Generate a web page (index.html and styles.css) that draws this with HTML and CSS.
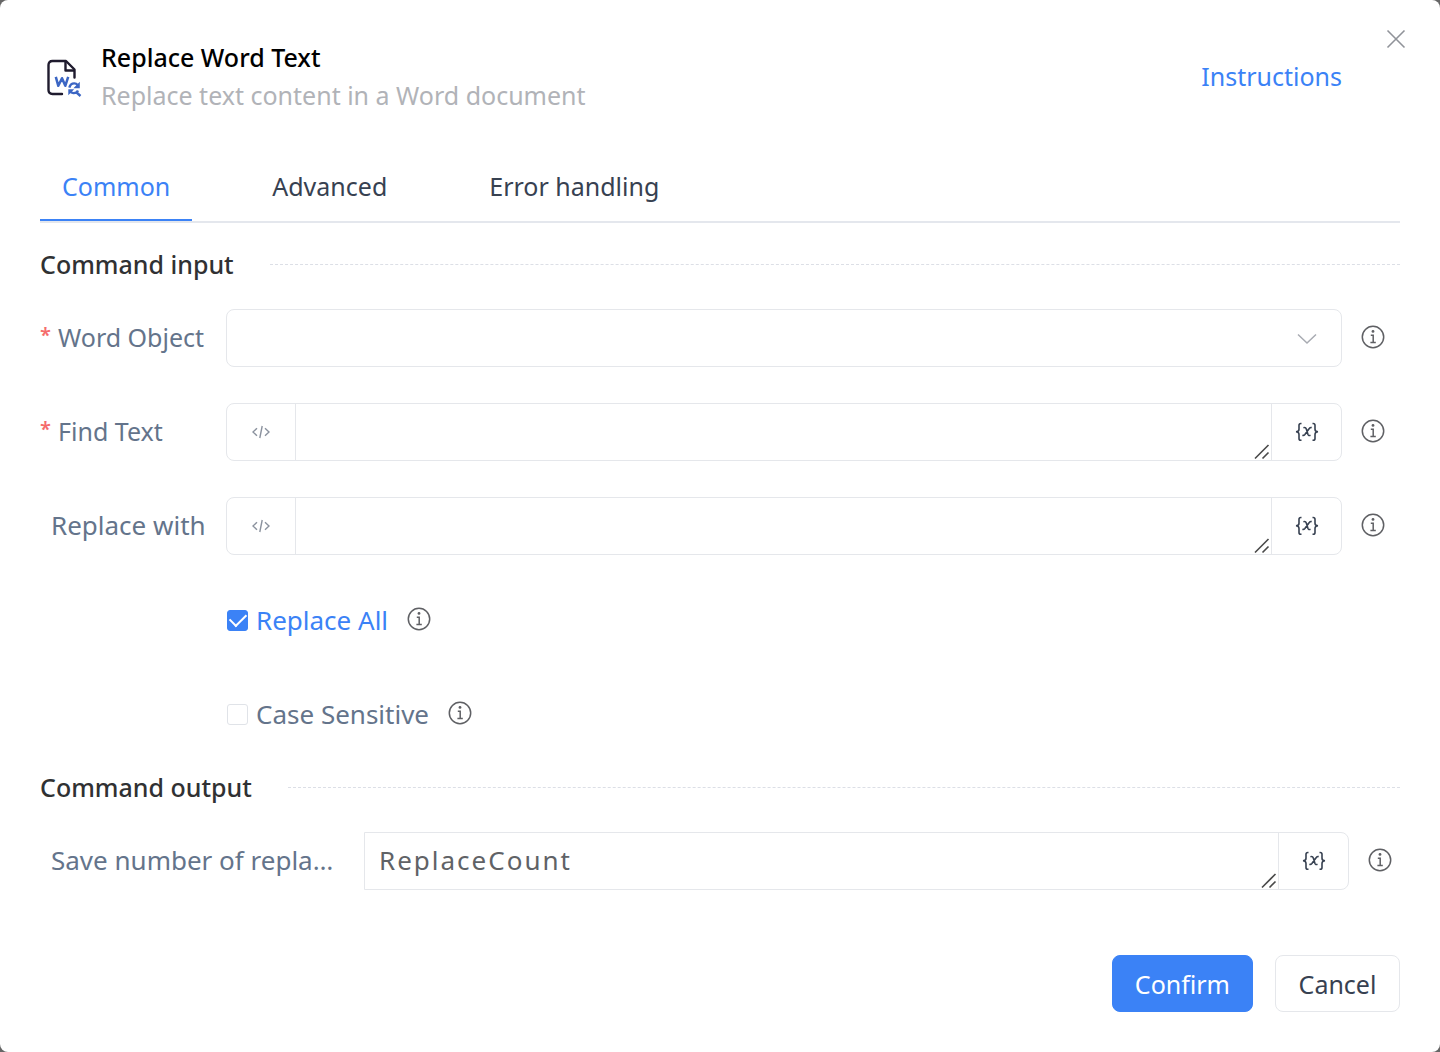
FILE: index.html
```html
<!DOCTYPE html>
<html lang="en">
<head>
<meta charset="utf-8">
<meta name="viewport" content="width=device-width, initial-scale=1">
<title>Replace Word Text</title>
<link rel="stylesheet" href="styles.css">
</head>
<body>
<svg class="sprite" aria-hidden="true">
  <symbol id="info" viewBox="0 0 24 24">
    <circle cx="12" cy="12" r="10.7" fill="none" stroke="currentColor" stroke-width="1.5"/>
    <circle cx="12" cy="6.4" r="1.4" fill="currentColor"/>
    <path d="M9.800 10.300h2.400v7M9.400 17.600h5.400" fill="none" stroke="currentColor" stroke-width="1.5"/>
  </symbol>
  <symbol id="code" viewBox="0 0 18 14">
    <path d="M5 3.2 1 7l4 3.8M13 3.2 17 7l-4 3.8M10.2 1 7.8 13" fill="none" stroke="currentColor" stroke-width="1.4"/>
  </symbol>
  <symbol id="variable" viewBox="0 0 24 20">
    <path d="M6.500 1.500H5.800Q4 1.500 4 3.300V7.200Q4 9.600 1 9.800Q4 10 4 12.400v4Q4 18.200 5.800 18.200h.7M17.500 1.500h.7Q20 1.500 20 3.300V7.200Q20 9.600 23 9.800Q20 10 20 12.400v4Q20 18.200 18.200 18.200h-.7" fill="none" stroke="currentColor" stroke-width="1.600"/>
    <path d="M8.400 5.700q2.300-.6 2.900 1.200l1.600 5.400q.6 1.800 2.600.9M16.700 5.600q-1.500-.3-2.600 1.100L9.900 12.400q-1.100 1.400-2.500.9" fill="none" stroke="currentColor" stroke-width="1.600"/>
  </symbol>
  <symbol id="grip" viewBox="0 0 16 16">
    <path d="M1 14.500 14.500 1M8.500 14.500l6-6" fill="none" stroke="#4a4a4a" stroke-width="1.600"/>
  </symbol>
</svg>

<main class="dialog">
  <button class="close" type="button" aria-label="Close">
    <svg viewBox="0 0 20 20"><path d="M1.500 1.500l17 17M18.500 1.500l-17 17" fill="none" stroke="currentColor" stroke-width="1.600"/></svg>
  </button>

  <header class="header">
    <svg class="logo" viewBox="0 0 36 38" aria-hidden="true">
      <g fill="none" stroke-linejoin="round">
        <path d="M16 35H6.500Q2.500 35 2.500 31V6Q2.500 2 6.500 2H20L28.500 10.500V18.500" stroke="#1f1b2e" stroke-width="2.400" stroke-linecap="round"/>
        <path d="M19.500 2v9.500h9" stroke="#1f1b2e" stroke-width="2.400"/>
        <path d="M9.800 17.800l2.500 9 3.700-7.600 3.300 7.600 2.900-9" stroke="#3c66c4" stroke-width="2.500"/>
        <path d="M23.300 28.600q1.300-4.300 5-4.200 2 .1 3.300 1.600M32 31.500q-1.500 2.800-4.600 2.600-2.200-.2-3.500-1.800M30 33l4.500 4" stroke="#3c66c4" stroke-width="2.400"/>
      </g>
      <path d="M33.800 22.800v6.400h-6.400zM22.300 36.200v-5.900h5.900z" fill="#3c66c4"/>
    </svg>
    <div class="titles">
      <h1 class="title">Replace Word Text</h1>
      <p class="subtitle">Replace text content in a Word document</p>
    </div>
    <a class="help-link" href="#instructions">Instructions</a>
  </header>

  <nav class="tabs" role="tablist">
    <button class="tab tab-active" type="button" role="tab" aria-selected="true">Common</button>
    <button class="tab" type="button" role="tab" aria-selected="false">Advanced</button>
    <button class="tab" type="button" role="tab" aria-selected="false">Error handling</button>
  </nav>

  <form class="form">
    <h2 class="section">Command input</h2>
    <div class="rows">
      <div class="row">
        <label class="label required" for="word-object">Word Object</label>
        <div class="control">
          <select class="select" id="word-object"><option value=""></option></select>
          <svg class="chevron" viewBox="0 0 20 12" aria-hidden="true"><path d="M1 1.500l9 8.500 9-8.500" fill="none" stroke="currentColor" stroke-width="1.500"/></svg>
        </div>
        <button class="info" type="button" aria-label="About Word Object"><svg><use href="#info"/></svg></button>
      </div>
      <div class="row">
        <label class="label required" for="find-text">Find Text</label>
        <div class="control">
          <button class="addon addon-code" type="button" aria-label="Expression mode"><svg><use href="#code"/></svg></button>
          <div class="area-wrap"><textarea class="area" id="find-text" rows="1"></textarea><svg class="grip"><use href="#grip"/></svg></div>
          <button class="addon addon-var" type="button" aria-label="Insert variable"><svg><use href="#variable"/></svg></button>
        </div>
        <button class="info" type="button" aria-label="About Find Text"><svg><use href="#info"/></svg></button>
      </div>
      <div class="row">
        <label class="label" for="replace-with">Replace with</label>
        <div class="control">
          <button class="addon addon-code" type="button" aria-label="Expression mode"><svg><use href="#code"/></svg></button>
          <div class="area-wrap"><textarea class="area" id="replace-with" rows="1"></textarea><svg class="grip"><use href="#grip"/></svg></div>
          <button class="addon addon-var" type="button" aria-label="Insert variable"><svg><use href="#variable"/></svg></button>
        </div>
        <button class="info" type="button" aria-label="About Replace with"><svg><use href="#info"/></svg></button>
      </div>
      <div class="row row-check">
        <label class="check"><input class="box" type="checkbox" checked><span>Replace All</span></label>
        <button class="info" type="button" aria-label="About Replace All"><svg><use href="#info"/></svg></button>
      </div>
      <div class="row row-check">
        <label class="check"><input class="box" type="checkbox"><span>Case Sensitive</span></label>
        <button class="info" type="button" aria-label="About Case Sensitive"><svg><use href="#info"/></svg></button>
      </div>
    </div>

    <h2 class="section section-output">Command output</h2>
    <div class="row row-output">
      <label class="label" for="save-count">Save number of repla…</label>
      <div class="control control-square">
        <div class="area-wrap"><textarea class="area" id="save-count" rows="1">ReplaceCount</textarea><svg class="grip"><use href="#grip"/></svg></div>
        <button class="addon addon-var" type="button" aria-label="Insert variable"><svg><use href="#variable"/></svg></button>
      </div>
      <button class="info" type="button" aria-label="About the saved value"><svg><use href="#info"/></svg></button>
    </div>

    <footer class="footer">
      <button class="btn btn-primary" type="button">Confirm</button>
      <button class="btn" type="button">Cancel</button>
    </footer>
  </form>
</main>
</body>
</html>
```
FILE: styles.css
```css
* { box-sizing: border-box; }

body {
  margin: 0;
  background: #666;
  color: #374151;
  font: 25px/38px "Noto Sans", "Open Sans", sans-serif;
}

button, select, textarea {
  margin: 0;
  padding: 0;
  border: 0;
  background: none;
  color: inherit;
  font: inherit;
}

.sprite { display: none; }

.dialog {
  position: relative;
  min-height: 100vh;
  padding: 38px 40px 40px;
  border-radius: 8px;
  background: #fff;
}

.close {
  position: absolute;
  top: 29px;
  right: 34px;
  width: 20px;
  height: 20px;
  color: #909399;
}
.close svg { display: block; width: 20px; height: 20px; }

.header {
  display: flex;
  align-items: center;
  padding: 0 58px 0 6px;
}
.logo { width: 36px; height: 38px; margin: 4px 19px 0 0; }
.titles { flex: 1; min-width: 0; }
.title {
  margin: 0;
  color: #000;
  font-size: 25px;
  font-weight: 500;
}
.subtitle { margin: 0; color: #b1b3b8; }
.help-link { color: #3b82f6; text-decoration: none; }

.tabs {
  display: flex;
  gap: 58px;
  margin-top: 40px;
  border-bottom: 2px solid #e4e7ed;
}
.tab {
  padding: 0 22px;
  border-bottom: 2px solid transparent;
  line-height: 65px;
}
.tab-active { border-color: #3b82f6; color: #3b82f6; }

.section {
  display: flex;
  align-items: center;
  gap: 36px;
  margin: 22px 0 26px;
  color: #303133;
  font-size: 25px;
  font-weight: 500;
}
.section-output { margin-top: 25px; }
.section::after {
  content: "";
  flex: 1;
  border-top: 1px dashed #dcdfe6;
}

.rows { display: grid; gap: 36px; }

.row {
  display: flex;
  align-items: center;
  height: 58px;
  padding-right: 15px;
}
.label {
  display: flex;
  width: 186px;
  margin-bottom: 3px;
  padding-left: 11px;
  color: #64748b;
  font-size: 26px;
  white-space: nowrap;
}
.required { padding-left: 0; font-size: 25px; }
.required::before {
  content: "*";
  width: 18px;
  color: #f56c6c;
  font-size: 20px;
  font-weight: 600;
  line-height: 34px;
}

.control {
  position: relative;
  display: flex;
  flex: 1;
  height: 58px;
  border: 1px solid #e5e7eb;
  border-radius: 8px;
}
.control-square { border-radius: 0 8px 8px 0; }
.select { width: 100%; padding: 0 60px 0 16px; appearance: none; }
.chevron {
  position: absolute;
  top: 23px;
  right: 24px;
  width: 20px;
  height: 12px;
  color: #a8abb2;
  pointer-events: none;
}

.addon { display: grid; place-items: center; width: 69px; }
.addon-code { border-right: 1px solid #e5e7eb; color: #8b929e; }
.addon-code svg { width: 18px; height: 14px; }
.addon-var { width: 70px; border-left: 1px solid #e5e7eb; }
.addon-var svg { width: 24px; height: 20px; }

.area-wrap { position: relative; display: flex; flex: 1; }
.area {
  width: 100%;
  padding: 8px 14px;
  color: #606266;
  font-size: 26px;
  letter-spacing: 2px;
  resize: none;
  overflow: hidden;
}
.grip {
  position: absolute;
  right: 1px;
  bottom: 0;
  width: 16px;
  height: 16px;
  pointer-events: none;
}

.info {
  width: 24px;
  height: 24px;
  margin: 0 0 3px 19px;
  color: #5f6064;
}
.info svg { display: block; width: 24px; height: 24px; }

.row-check { padding-left: 187px; }
.check {
  display: flex;
  align-items: center;
  gap: 8px;
  color: #64748b;
  font-size: 26px;
}
.check:has(:checked) { color: #3b82f6; }
.box {
  display: grid;
  place-items: center;
  width: 21px;
  height: 21px;
  margin: 0;
  border: 1px solid #e0e3e8;
  border-radius: 3px;
  appearance: none;
}
.box:checked { border-color: #3b82f6; background: #3b82f6; }
.box:checked::after {
  content: "";
  width: 14px;
  height: 8px;
  margin-bottom: 4px;
  border: solid #fff;
  border-width: 0 0 2px 2px;
  transform: rotate(-45deg);
}

.row-output { padding-right: 8px; }
.row-output .label { width: 296px; margin-right: 28px; }

.footer {
  display: flex;
  justify-content: flex-end;
  gap: 22px;
  margin-top: 65px;
}
.btn {
  min-width: 125px;
  height: 57px;
  padding: 0 22px;
  border: 1px solid #e5e7eb;
  border-radius: 8px;
}
.btn-primary { border-color: #3b82f6; background: #3b82f6; color: #fff; }
```
